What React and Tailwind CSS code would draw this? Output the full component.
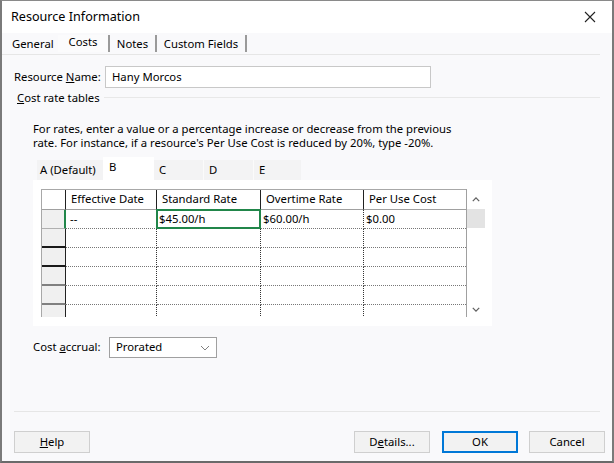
import React from "react";

function X() {
  return (
    <svg width="12" height="12" viewBox="0 0 12 12" className="block">
      <path d="M1 1 L11 11 M11 1 L1 11" stroke="#222" strokeWidth="1.1" fill="none" />
    </svg>
  );
}

function Chev({ up = false, color = "#777", w = 10, h = 6, sw = 1.2 }) {
  return (
    <svg width={w} height={h} viewBox="0 0 10 6" className="block">
      <path d={up ? "M1 5 L5 1 L9 5" : "M1 1 L5 5 L9 1"} stroke={color} strokeWidth={sw} fill="none" />
    </svg>
  );
}

const rowsCount = 6;

export default function App() {
  return (
    <div className="w-[614px] h-[463px] bg-[#f9f9fb] border-t border-x-2 border-b-2 border-t-[#8a8a8a] border-x-[#7a7a7a] border-b-[#6a6a6a] flex flex-col text-[11.3px] text-black font-['Noto_Sans',sans-serif] overflow-hidden whitespace-nowrap">
      {/* Title bar */}
      <div className="h-[32px] bg-white flex items-center justify-between pl-[9px] pr-[16px] shrink-0">
        <span className="text-[12.6px] leading-none">Resource Information</span>
        <X />
      </div>

      {/* Tabs */}
      <div className="h-[22px] flex items-stretch border-b border-[#e6e6e6] shrink-0 mr-[12px]">
        <div className="w-[56px] flex items-center pl-[10px] pt-[2px]">General</div>
        <div className="w-[52px] flex items-center justify-center pb-[2px] bg-[#fbfbfc] border-r-2 border-[#9a9a9a] my-[2px]">Costs</div>
        <div className="w-[47px] flex items-center justify-center pt-[2px] border-r-2 border-[#9a9a9a] my-[2px]">Notes</div>
        <div className="w-[90px] flex items-center justify-center pt-[2px] border-r-2 border-[#9a9a9a] my-[2px]">Custom Fields</div>
      </div>

      {/* Resource Name */}
      <div className="flex items-center mt-[11px] shrink-0">
        <span className="w-[103px] pl-[12px]">
          Resource <span className="underline">N</span>ame:
        </span>
        <div className="w-[326px] h-[22px] bg-white border border-[#c8c8c8] flex items-center pl-[6px]">Hany Morcos</div>
      </div>

      {/* Cost rate tables */}
      <div className="flex items-center mt-[2px] h-[16px] shrink-0 pl-[15px] pr-[12px]">
        <span>
          <span className="underline">C</span>ost rate tables
        </span>
        <div className="flex-1 border-t border-[#e8e8e8] ml-[4px] mt-[-1px]"></div>
      </div>

      {/* paragraph */}
      <div className="mt-[16px] pl-[31px] leading-[14px] shrink-0">
        <div>For rates, enter a value or a percentage increase or decrease from the previous</div>
        <div>rate. For instance, if a resource's Per Use Cost is reduced by 20%, type -20%.</div>
      </div>

      {/* inner tabs */}
      <div className="mt-[7px] ml-[33px] h-[23px] flex items-end shrink-0">
        <div className="w-[2px]"></div>
        <div className="w-[66px] h-[20px] flex items-center pl-[3px] bg-[#f3f3f4]">A (Default)</div>
        <div className="w-[51px] h-[23px] flex items-start pt-[2px] pl-[6px] bg-white">B</div>
        <div className="w-[50px] h-[20px] flex items-center pl-[5px] bg-[#f3f3f4] border-r border-[#fbfbfb]">C</div>
        <div className="w-[50px] h-[20px] flex items-center pl-[5px] bg-[#f3f3f4] border-r border-[#fbfbfb]">D</div>
        <div className="w-[47px] h-[20px] flex items-center pl-[5px] bg-[#f3f3f4]">E</div>
      </div>

      {/* white panel */}
      <div className="ml-[31px] w-[459px] h-[146px] bg-white pt-[9px] pl-[8px] shrink-0">
        <div className="flex w-[444px] h-[128px] overflow-hidden">
          {/* table */}
          <div className="w-[425px] border-l border-t border-[#a8a8a8] grid grid-cols-[24px_91px_104px_103px_102px] grid-rows-[20px_19px_19px_19px_19px_19px_19px] content-start">
            {/* header */}
            <div className="bg-white border-r border-b border-r-[#222] border-b-[#a0a0a0]"></div>
            <div className="border-r border-b border-r-[#222] border-b-[#a0a0a0] pl-[5px] flex items-center">Effective Date</div>
            <div className="border-r border-b border-r-[#222] border-b-[#a0a0a0] pl-[5px] flex items-center">Standard Rate</div>
            <div className="border-r border-b border-r-[#222] border-b-[#a0a0a0] pl-[5px] flex items-center">Overtime Rate</div>
            <div className="border-b border-b-[#a0a0a0] pl-[5px] flex items-center">Per Use Cost</div>

            {Array.from({ length: rowsCount }).map((_, i) => {
              const first = i === 0;
              const rowHdrBorder = i === 0 ? "border-b border-b-[#b0b0b0]" : i < 3 ? "border-b-2 border-b-[#1a1a1a]" : "border-b-2 border-b-[#808080]";
              return (
                <React.Fragment key={i}>
                  <div className={`bg-[#f0f0f0] ${rowHdrBorder} ${first ? "border-r-2 border-r-[#21864a]" : "border-r border-r-[#222]"}`}></div>
                  <div className="border-b border-dotted border-r border-b-[#777] border-r-[#333] flex items-center pl-[4px] leading-none">
                    {first ? "--" : ""}
                  </div>
                  <div className="border-b border-dotted border-r border-b-[#777] border-r-[#333] flex items-center pl-[2px] relative leading-none">
                    {first ? (
                      <>
                        <div className="absolute -left-[1px] -top-[1px] -right-[1px] -bottom-[1px] border-2 border-[#21864a]"></div>
                        $45.00/h
                      </>
                    ) : ""}
                  </div>
                  <div className="border-b border-dotted border-r border-b-[#777] border-r-[#333] flex items-center pl-[2px] leading-none">
                    {first ? "$60.00/h" : ""}
                  </div>
                  <div className="border-b border-dotted border-b-[#777] flex items-center pl-[2px] leading-none">
                    {first ? "$0.00" : ""}
                  </div>
                </React.Fragment>
              );
            })}
          </div>
          {/* scrollbar */}
          <div className="w-[19px] flex flex-col border-l border-[#a0a0a0] bg-white">
            <div className="h-[20px] flex items-center justify-center border-t border-white">
              <Chev up color="#606060" w={8} h={5} sw={1.6} />
            </div>
            <div className="h-[19px] bg-[#e3e3e3]"></div>
            <div className="flex-1 flex items-end justify-center pb-[5px]">
              <Chev color="#606060" w={8} h={5} sw={1.6} />
            </div>
          </div>
        </div>
      </div>

      {/* cost accrual */}
      <div className="flex items-center mt-[11px] shrink-0">
        <span className="w-[107px] pl-[31px]">
          Cost <span className="underline">a</span>ccrual:
        </span>
        <div className="w-[108px] h-[21px] bg-white border border-[#a0a0a0] flex items-center justify-between pl-[6px] pr-[6px]">
          <span>Prorated</span>
          <Chev color="#808080" w={10} h={6} sw={1} />
        </div>
      </div>

      <div className="flex-1"></div>

      {/* separator */}
      <div className="mx-[12px] border-t border-[#e6e6e6] shrink-0"></div>

      {/* buttons */}
      <div className="flex items-center mt-[19px] mb-[8px] pl-[12px] pr-[7px] shrink-0">
        <button className="w-[76px] h-[22px] bg-[#f2f2f2] border border-[#cfcfcf] flex items-center justify-center">
          <span><span className="underline">H</span>elp</span>
        </button>
        <div className="flex-1"></div>
        <button className="w-[76px] h-[22px] bg-[#f2f2f2] border border-[#cfcfcf] flex items-center justify-center">
          <span>D<span className="underline">e</span>tails...</span>
        </button>
        <button className="ml-[12px] w-[76px] h-[22px] bg-[#f2f2f2] border-2 border-[#0078d7] flex items-center justify-center">
          OK
        </button>
        <button className="ml-[11px] w-[76px] h-[22px] bg-[#f2f2f2] border border-[#cfcfcf] flex items-center justify-center">
          Cancel
        </button>
      </div>
    </div>
  );
}
